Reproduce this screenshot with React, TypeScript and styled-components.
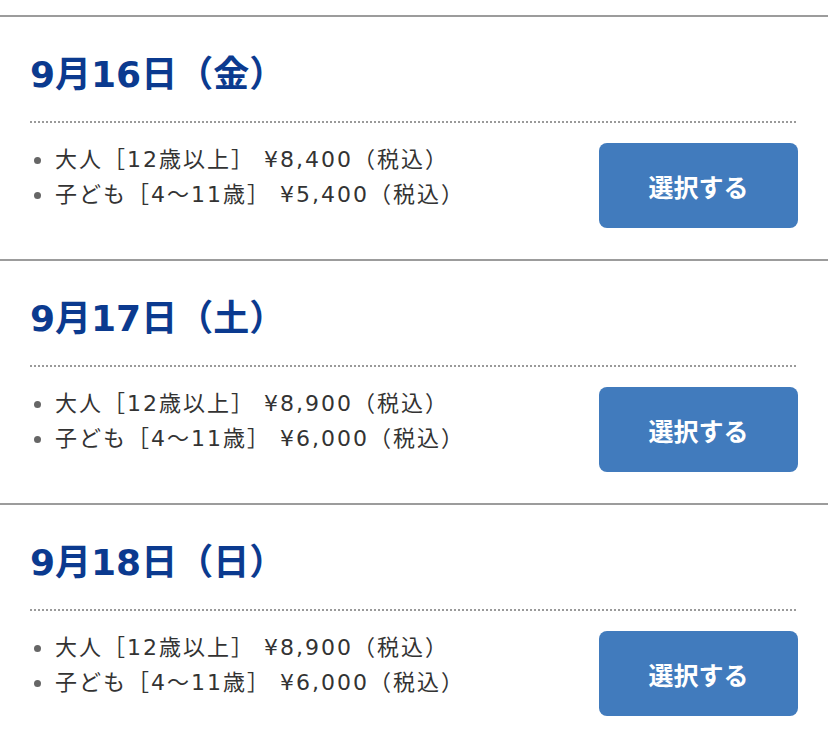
import React from "react";
import styled, { createGlobalStyle } from "styled-components";

const Global = createGlobalStyle`
  html, body { margin: 0; padding: 0; background: #fff; }
  body {
    font-family: "DejaVu Sans", "Noto Sans CJK JP", sans-serif;
    color: #333;
  }
`;

const Page = styled.div`
  padding-top: 15px;
`;

const Section = styled.section`
  border-top: 2px solid #9c9c9c;
  padding: 34px 30px 31px;
`;

const Title = styled.h2`
  margin: 0;
  font-family: "DejaVu Sans", "Noto Sans CJK JP", sans-serif;
  font-size: 36px;
  line-height: 48px;
  height: 48px;
  font-weight: 700;
  letter-spacing: 0;
  color: #0b3a8f;
`;

const Divider = styled.div`
  margin-top: 22px;
  height: 2px;
  background-image: repeating-linear-gradient(
    to right,
    #9a9a9a 0 2px,
    transparent 2px 4px
  );
`;

const Row = styled.div`
  display: flex;
  justify-content: space-between;
  align-items: flex-start;
  padding-top: 19px;
`;

const PriceList = styled.ul`
  list-style: none;
  margin: 0;
  padding: 0;
`;

const PriceItem = styled.li`
  position: relative;
  padding-left: 25px;
  font-size: 22px;
  line-height: 35px;
  height: 35px;
  letter-spacing: 2px;
  color: #333;
  white-space: nowrap;
  &::before {
    content: "";
    position: absolute;
    left: 4px;
    top: 15px;
    width: 7px;
    height: 7px;
    border-radius: 50%;
    background: #666;
  }
`;

const SelectButton = styled.button`
  width: 199px;
  height: 85px;
  border: none;
  border-radius: 8px;
  background: #417bbd;
  color: #fff;
  font-family: "Noto Sans CJK JP", sans-serif;
  font-size: 25px;
  font-weight: 700;
  cursor: pointer;
  margin-top: 1px;
  padding: 0;
  flex-shrink: 0;
`;

const days = [
  { title: "9月16日（金）", adult: "¥8,400", child: "¥5,400" },
  { title: "9月17日（土）", adult: "¥8,900", child: "¥6,000" },
  { title: "9月18日（日）", adult: "¥8,900", child: "¥6,000" },
];

export default function App() {
  return (
    <Page>
      <Global />
      {days.map((d) => (
        <Section key={d.title}>
          <Title>{d.title}</Title>
          <Divider />
          <Row>
            <PriceList>
              <PriceItem>大人［12歳以上］ {d.adult}（税込）</PriceItem>
              <PriceItem>子ども［4〜11歳］ {d.child}（税込）</PriceItem>
            </PriceList>
            <SelectButton>選択する</SelectButton>
          </Row>
        </Section>
      ))}
    </Page>
  );
}
